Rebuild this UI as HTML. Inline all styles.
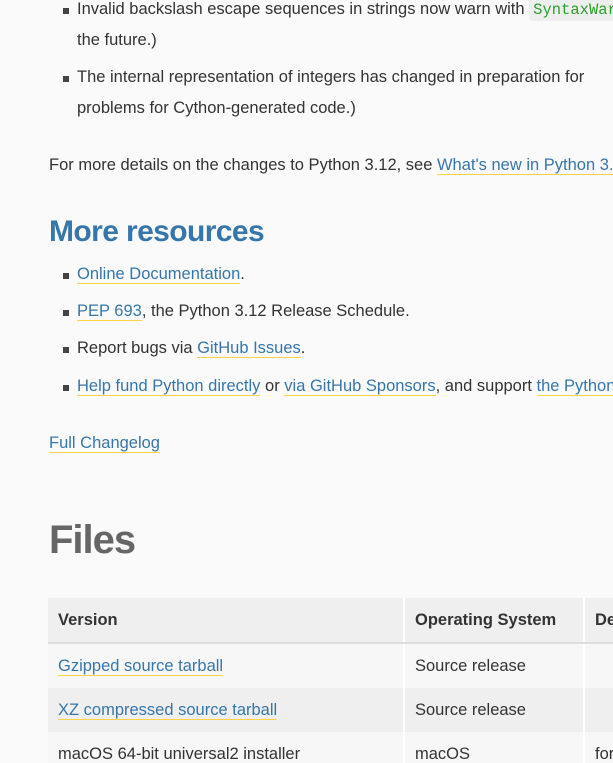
<!DOCTYPE html>
<html><head><meta charset="utf-8"><style>
html,body{margin:0;padding:0;background:#fafafa;width:613px;height:763px;overflow:hidden;}
#w{position:relative;width:613px;height:763px;overflow:hidden;}
body{font-family:"Liberation Sans",sans-serif;color:#333;font-size:16.5px;}
.a{position:absolute;white-space:nowrap;}
a{color:#3776ab;text-decoration:none;border-bottom:1px solid #ffd343;}
.b{position:absolute;width:6px;height:6px;background:#444;left:63px;}
code{font-family:"Liberation Mono",monospace;color:#2aa02a;background:#eee;border-radius:4px;padding:2px 4px;font-size:15.5px;}
h2{position:absolute;margin:0;left:49px;top:215px;font-size:30px;color:#3776ab;font-weight:bold;letter-spacing:-0.6px;white-space:nowrap;}
h1{position:absolute;margin:0;left:49px;top:518px;font-size:40px;color:#666;font-weight:bold;letter-spacing:-1px;}
table{position:absolute;left:48px;top:598px;border-collapse:collapse;font-size:16.5px;table-layout:fixed;width:656px;}
td,th{height:44px;padding:0 10px;text-align:left;border-right:2px solid #fff;vertical-align:middle;white-space:nowrap;overflow:hidden;}
th{background:#efefef;border-bottom:2px solid #ddd;font-weight:bold;color:#333;}
tr.r1 td{background:#f7f7f7;} tr.r2 td{background:#efefef;} tr.r3 td{background:#f7f7f7;}
</style></head><body><div id="w">
<div class="b" style="top:8px"></div>
<div class="a" style="left:77px;top:0px">Invalid backslash escape sequences in strings now warn with <code>SyntaxWarning</code></div>
<div class="a" style="left:77px;top:31px">the future.)</div>
<div class="b" style="top:76px"></div>
<div class="a" style="left:77px;top:68px">The internal representation of integers has changed in preparation for</div>
<div class="a" style="left:77px;top:99px">problems for Cython-generated code.)</div>
<div class="a" style="left:49px;top:156px">For more details on the changes to Python 3.12, see <a>What's new in Python 3.12</a></div>
<h2>More resources</h2>
<div class="b" style="top:273px"></div>
<div class="a" style="left:77px;top:265px"><a>Online Documentation</a>.</div>
<div class="b" style="top:310px"></div>
<div class="a" style="left:77px;top:302px"><a>PEP 693</a>, the Python 3.12 Release Schedule.</div>
<div class="b" style="top:347px"></div>
<div class="a" style="left:77px;top:339px">Report bugs via <a>GitHub Issues</a>.</div>
<div class="b" style="top:385px"></div>
<div class="a" style="left:77px;top:377px"><a>Help fund Python directly</a> or <a>via GitHub Sponsors</a>, and support <a>the Python community</a></div>
<div class="a" style="left:49px;top:434px"><a>Full Changelog</a></div>
<h1>Files</h1>
<table>
<colgroup><col style="width:356px"><col style="width:180px"><col style="width:120px"></colgroup>
<tr><th>Version</th><th>Operating System</th><th>Description</th></tr>
<tr class="r1"><td><a>Gzipped source tarball</a></td><td>Source release</td><td></td></tr>
<tr class="r2"><td><a>XZ compressed source tarball</a></td><td>Source release</td><td></td></tr>
<tr class="r3"><td>macOS 64-bit universal2 installer</td><td>macOS</td><td>for macOS</td></tr>
</table>
</div></body></html>
